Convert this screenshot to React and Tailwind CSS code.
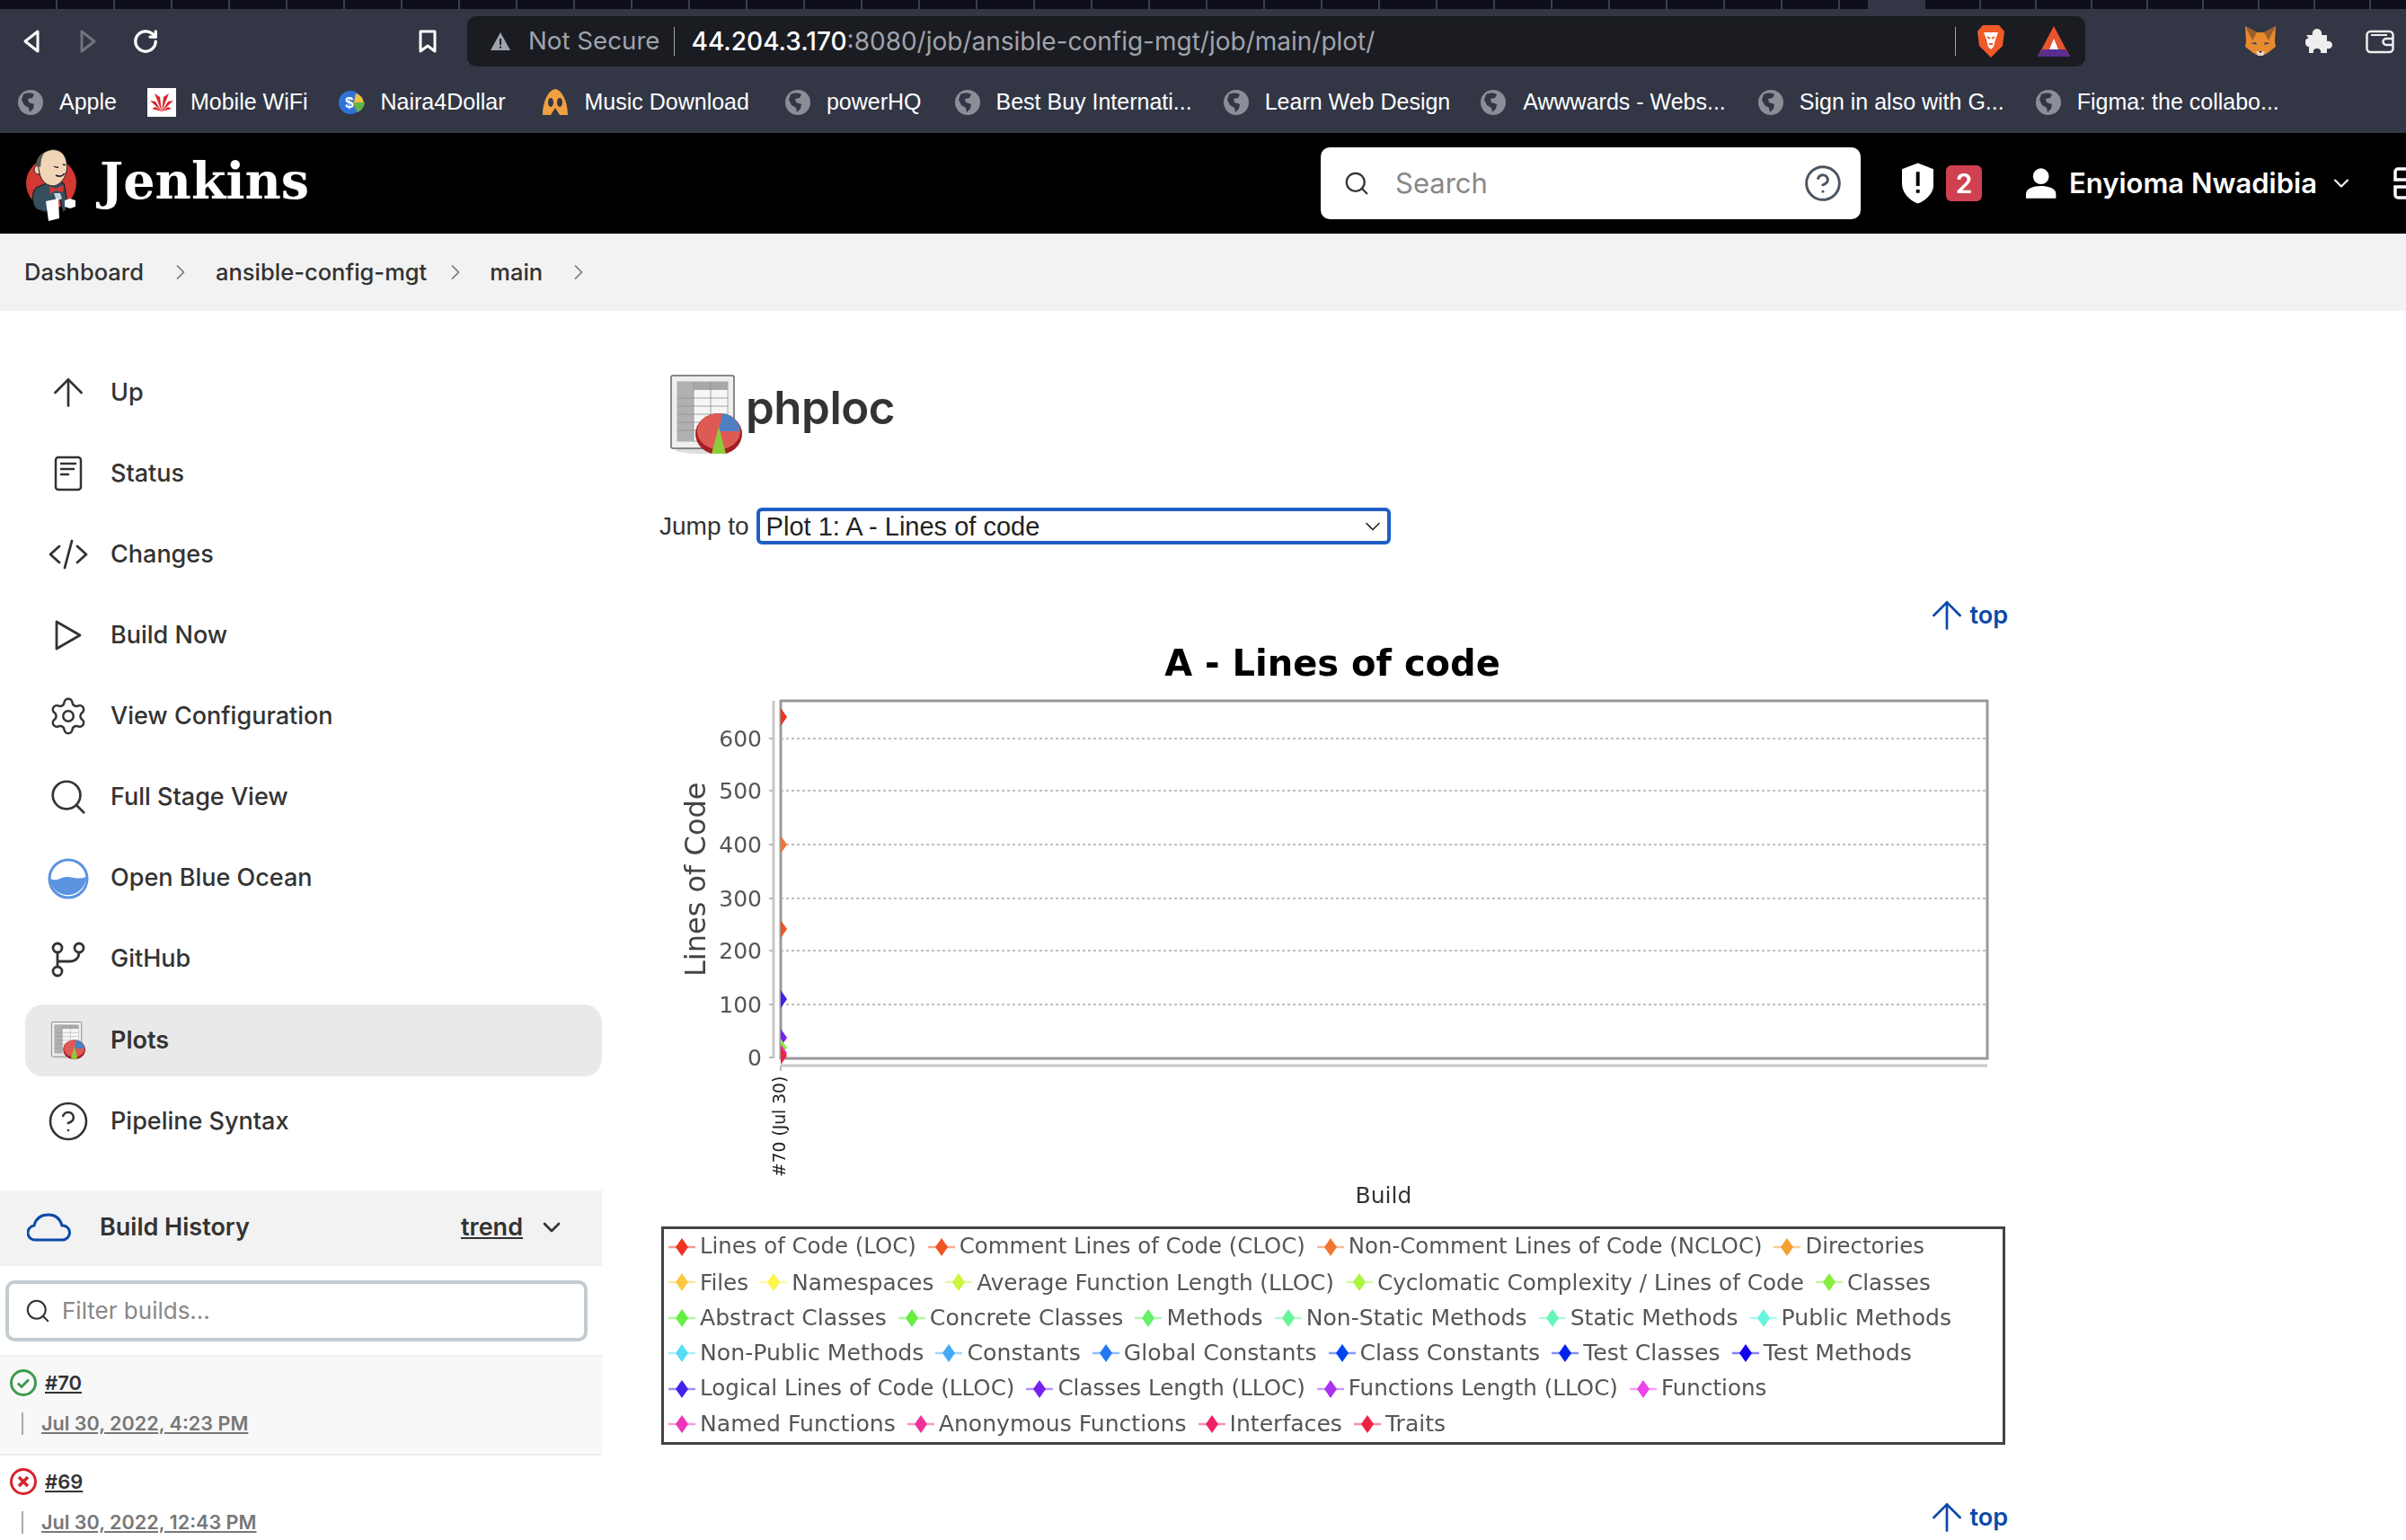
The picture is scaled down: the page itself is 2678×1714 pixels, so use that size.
import { ArrowUp, ChevronDown, ChevronRight, CircleHelp, RotateCw, Search, Settings } from "lucide-react"

const bookmarks = [
  { label: "Apple", icon: "globe", ml: 20, gap: 18 },
  { label: "Mobile WiFi", icon: "huawei", ml: 34, gap: 16 },
  { label: "Naira4Dollar", icon: "naira", ml: 33, gap: 16 },
  { label: "Music Download", icon: "music", ml: 40, gap: 16 },
  { label: "powerHQ", icon: "globe", ml: 40, gap: 18 },
  { label: "Best Buy Internati...", icon: "globe", ml: 37, gap: 18 },
  { label: "Learn Web Design", icon: "globe", ml: 35, gap: 18 },
  { label: "Awwwards - Webs...", icon: "globe", ml: 34, gap: 19 },
  { label: "Sign in also with G...", icon: "globe", ml: 36, gap: 18 },
  { label: "Figma: the collabo...", icon: "globe", ml: 35, gap: 18 },
]

// text size differs a little per row, the chart image is a hinted render
const legendRows = [
  { size: "text-[24.4px]", items: [["Lines of Code (LOC)", "#ee3322"], ["Comment Lines of Code (CLOC)", "#ee5522"], ["Non-Comment Lines of Code (NCLOC)", "#f07730"], ["Directories", "#f5a030"]] },
  { size: "text-[24.7px]", items: [["Files", "#fdc840"], ["Namespaces", "#fff44a"], ["Average Function Length (LLOC)", "#ccf53d"], ["Cyclomatic Complexity / Lines of Code", "#aaf53d"], ["Classes", "#88ee3d"]] },
  { size: "text-[25.1px]", items: [["Abstract Classes", "#66ee44"], ["Concrete Classes", "#66ee44"], ["Methods", "#66f266"], ["Non-Static Methods", "#66f599"], ["Static Methods", "#66f5bb"], ["Public Methods", "#66f5dd"]] },
  { size: "text-[25.2px]", items: [["Non-Public Methods", "#55ddf5"], ["Constants", "#44aaf5"], ["Global Constants", "#2277f5"], ["Class Constants", "#0044ee"], ["Test Classes", "#0022ee"], ["Test Methods", "#1100ee"]] },
  { size: "text-[24.6px]", items: [["Logical Lines of Code (LLOC)", "#4422ee"], ["Classes Length (LLOC)", "#7722ee"], ["Functions Length (LLOC)", "#aa33ee"], ["Functions", "#ee44ee"]] },
  { size: "text-[25.1px]", items: [["Named Functions", "#ee33bb"], ["Anonymous Functions", "#ee3399"], ["Interfaces", "#ee2266"], ["Traits", "#ee2244"]] },
]

const GlobeIcon = () => (
  <svg width="28" height="28" viewBox="0 0 28 28">
    <circle cx="14" cy="14" r="14" fill="#8b8e97" />
    <path d="M6 5c4-2 9-2 12 0l-2 4-5 1 1 4 6 2-1 5-4 4-1-5-5-3-3-6z" fill="#323645" />
  </svg>
)

const HuaweiIcon = () => (
  <svg width="32" height="32" viewBox="0 0 32 32">
    <rect width="32" height="32" fill="#fff" />
    <path d="M16 26 8 6l6 4 2 16 2-16 6-4zM16 26 3 14l6 1zM16 26l13-12-6 1zM16 26 5 23l4-2zM16 26l11-3-4-2z" fill="#d9222a" />
  </svg>
)

const NairaIcon = () => (
  <svg width="32" height="32" viewBox="0 0 32 32">
    <circle cx="14" cy="16" r="13" fill="#2f73d8" />
    <path d="M16 16h14a14 14 0 0 1-8 11z" fill="#5fb548" />
    <path d="M20 6a13 13 0 0 1 9 10H18z" fill="#f3c33c" />
    <text x="8" y="22" fontSize="17" fontWeight="700" fill="#fff" fontFamily="Liberation Sans, sans-serif">$</text>
  </svg>
)

const MusicIcon = () => (
  <svg width="32" height="32" viewBox="0 0 32 32">
    <path d="M16 1c9 2 14 16 14 29h-9l-5-8-5 8H2C2 17 7 3 16 1z" fill="#f0a040" />
    <ellipse cx="11" cy="16" rx="3" ry="5" fill="#323645" />
    <ellipse cx="21" cy="16" rx="3" ry="5" fill="#323645" />
  </svg>
)

const bookmarkIcons = { globe: GlobeIcon, huawei: HuaweiIcon, naira: NairaIcon, music: MusicIcon }

// the spreadsheet with pie chart that Plots uses
const PlotIcon = ({ size }) => (
  <svg width={size} height={size * 1.1} viewBox="0 0 80 88">
    <ellipse cx="38" cy="84" rx="32" ry="4" fill="#ddd" />
    <rect x="1" y="1" width="70" height="81" rx="2" fill="#efefef" stroke="#666" strokeWidth="1.5" />
    <rect x="8" y="8" width="56" height="66" fill="#f6f6f6" stroke="#aaa" />
    <rect x="8" y="8" width="56" height="9" fill="#a8a8a8" />
    <rect x="8" y="8" width="18" height="66" fill="#b0b0b0" />
    <path d="M8 26h56M8 35h56M8 44h56M8 53h56M8 62h56M26 8v66M45 8v66" stroke="#8f8f8f" strokeWidth="0.8" />
    <ellipse cx="54" cy="66" rx="26" ry="23" fill="#a31f1f" />
    <ellipse cx="54" cy="63" rx="24" ry="20" fill="#dd5a55" />
    <path d="M54 63l4-20a24 20 0 0 1 20 20z" fill="#4f7fc0" />
    <path d="M54 58l8 30H46z" fill="#8ecb3c" />
  </svg>
)

const JenkinsLogo = () => (
  <svg width="100" height="105" viewBox="0 0 100 105">
    <circle cx="47" cy="52" r="28" fill="#d33833" />
    <path d="M30 57C24 64 26 76 31 81l10 3 6-10 10-4 3 14 3-2 1-14-3-16-10-4z" fill="#335061" stroke="#111" strokeWidth="1" />
    <circle cx="33" cy="37" r="5" fill="#f0d6b7" stroke="#222" strokeWidth="1" />
    <path d="M32 30C33 18 45 13 53 15c9 2 13 12 11 24-2 9-8 15-14 16-9 0-14-6-16-14z" fill="#f0d6b7" stroke="#222" strokeWidth="1" />
    <path d="M30 33c0-8 4-13 9-15l-3 7-1 9z" fill="#555" />
    <path d="M50 33q3 2 5 1M60 31q2 1 3 0M52 43q6 3 10-2" fill="none" stroke="#222" strokeWidth="1.5" />
    <path d="M45 55l7 3 9-4-1 8-8-2-6 4z" fill="#d33833" />
    <path d="M50 63h7l2 6-6 3z" fill="#c8d5df" />
    <path d="M41 72l14-3 1 22-12 3z" fill="#fff" />
    <path d="M62 71l6-2 6 2v7l-6 2-6-2z" fill="#fff" />
  </svg>
)

const SideItem = ({ icon, label, active }) => (
  <div className={`flex h-[80px] items-center rounded-[20px] ${active ? "bg-[#e9e9e9] font-semibold" : "font-medium"}`}>
    <div className="flex w-[95px] shrink-0 justify-center">{icon}</div>
    <span>{label}</span>
  </div>
)

const TopLink = () => (
  <div className="flex h-[40px] items-center justify-end pr-[1px] text-[27px] font-semibold text-[#0b4aa8]">
    <ArrowUp size={50} strokeWidth={1.3} />
    <span>top</span>
  </div>
)

const BuildRow = ({ num, date, ok }) => (
  <div className={`h-[110px] shrink-0 border-t-2 border-[#eeeeee] pl-[11px] pt-[13px] ${ok ? "bg-[#f8f8f8]" : ""}`}>
    <div className="flex items-center gap-[9px]">
      {ok ? (
        <svg width="30" height="30" viewBox="0 0 30 30" fill="none">
          <circle cx="15" cy="15" r="13.500" stroke="#3f9a4f" strokeWidth="3" />
          <path d="M9 15.500l4 4 8-8" stroke="#3f9a4f" strokeWidth="3" />
        </svg>
      ) : (
        <svg width="30" height="30" viewBox="0 0 30 30" fill="none">
          <circle cx="15" cy="15" r="13.500" stroke="#d3262e" strokeWidth="3" />
          <path d="M10 10l10 10M20 10 10 20" stroke="#d3262e" strokeWidth="3.500" />
        </svg>
      )}
      <span className="text-[22px] font-semibold text-[#333] underline">{num}</span>
    </div>
    <div className="mt-[12px] flex items-center">
      <div className="ml-[13px] h-[25px] w-[2px] bg-[#aaaaaa]" />
      <span className="ml-[20px] text-[21.6px] font-semibold text-[#777] underline">{date}</span>
    </div>
  </div>
)

const LegendMarker = ({ color }) => (
  <svg width="30" height="30" viewBox="0 0 30 30" className="shrink-0">
    <path d="M0 15h30" stroke={color} strokeWidth="2.500" opacity="0.5" />
    <path d="M15 5l7 10-7 10-7-10z" fill={color} />
  </svg>
)

const Chart = () => {
  const grid = [[822, "600"], [880, "500"], [940, "400"], [1000, "300"], [1058, "200"], [1118, "100"], [1177, "0"]]
  const points = [[798, "#ee3322"], [940, "#f07730"], [1034, "#ee5522"], [1112, "#4422ee"], [1155, "#7722ee"], [1166, "#88ee3d"], [1172, "#ee33bb"], [1175, "#ee2244"]]
  return (
    <svg width="1500" height="650" viewBox="734 705 1500 650" className="block blur-[0.4px]" fontFamily="DejaVu Sans, sans-serif">
      <text x="1483" y="752" textAnchor="middle" fontSize="40" fontWeight="700" fill="#000">A - Lines of code</text>
      <rect x="869" y="780" width="1343" height="398" fill="#fff" stroke="#9a9a9a" strokeWidth="3" />
      <path d="M861 780v398M869 1186h1343" stroke="#c8c8c8" strokeWidth="3" fill="none" />
      <path d="M869 1186v6" stroke="#bbb" strokeWidth="2" />
      {grid.map(([y, label]) => (
        <g key={label}>
          <path d={`M856 ${y}h5`} stroke="#bbb" strokeWidth="2" />
          {label !== "0" && <path d={`M869 ${y}H2212`} stroke="#aaa" strokeWidth="1.5" strokeDasharray="3 3" />}
          <text x="848" y={y + 9} textAnchor="end" fontSize="25" fill="#555">{label}</text>
        </g>
      ))}
      {points.map(([y, color]) => (
        <path key={y} d={`M869 ${y - 10}l7 10-7 10z`} fill={color} />
      ))}
      <text transform="translate(785 1087) rotate(-90)" fontSize="32" fill="#444">Lines of Code</text>
      <text transform="translate(874 1310) rotate(-90)" fontSize="18.700" fill="#222">#70 (Jul 30)</text>
      <text x="1540" y="1339" textAnchor="middle" fontSize="25" fill="#333">Build</text>
    </svg>
  )
}

export default function App() {
  return (
    <div className="flex h-[1714px] w-[2678px] flex-col overflow-hidden bg-white font-[Inter,sans-serif] text-[#333]">
      {/* browser tabs */}
      <div className="flex h-[10px] shrink-0 bg-[#0d0e1a]">
        <div className="h-full w-[2079px] bg-[repeating-linear-gradient(90deg,#0d0e1a_0,#0d0e1a_62px,#3a3d4a_62px,#3a3d4a_64px)]" />
        <div className="h-full w-[64px] bg-[#323645]" />
        <div className="h-full grow bg-[repeating-linear-gradient(90deg,#0d0e1a_0,#0d0e1a_60px,#3a3d4a_60px,#3a3d4a_62px)]" />
      </div>

      {/* browser toolbar */}
      <div className="flex h-[68px] shrink-0 items-center bg-[#323645] pt-[4px] text-[27.7px]">
        <svg width="20" height="28" viewBox="0 0 20 28" fill="none" className="ml-[25px]"><path d="M17 3 3 14l14 11z" stroke="#fff" strokeWidth="3" strokeLinejoin="round" /></svg>
        <svg width="20" height="28" viewBox="0 0 20 28" fill="none" className="ml-[43px]"><path d="M3 3l14 11L3 25z" stroke="#70737e" strokeWidth="3" strokeLinejoin="round" /></svg>
        <RotateCw size={30} color="#fff" strokeWidth={2.6} className="ml-[39px]" />
        <svg width="22" height="28" viewBox="0 0 22 28" fill="none" className="ml-[288px]"><path d="M3 3h16v22l-8-6-8 6z" stroke="#fff" strokeWidth="3" strokeLinejoin="round" /></svg>
        <div className="ml-[33px] flex h-[56px] w-[1801px] items-center rounded-[10px] bg-[#1a1c22] pl-[25px]">
          <svg width="24" height="22" viewBox="0 0 24 22"><path d="M12 1 23 21H1z" fill="#a0a3ab" /><path d="M11 8h2v7h-2zM11 16.500h2v2h-2z" fill="#1a1c22" /></svg>
          <span className="ml-[19px] whitespace-nowrap text-[#a0a3ab]">Not Secure</span>
          <div className="ml-[15px] h-[32px] w-px bg-[#a0a3ab]" />
          <span className="ml-[19px] text-[28px] font-medium text-white">44.204.3.170</span>
          <span className="whitespace-nowrap text-[28px] text-[#a0a3ab]">:8080/job/ansible-config-mgt/job/main/plot/</span>
          <div className="ml-auto h-[32px] w-px bg-[#a0a3ab]" />
          <svg width="32" height="38" viewBox="0 0 32 38" className="ml-[23px]">
            <path d="M7 1h18l6 7-2 16-13 13L3 24 1 8z" fill="#ef5a28" />
            <path d="M8 9h16l-3 8-2 8-3 3-3-3-2-8z" fill="#fff" />
            <path d="M12 14l3 2M20 14l-3 2M14 22h4" stroke="#ef5a28" strokeWidth="2" />
          </svg>
          <svg width="38" height="34" viewBox="0 0 38 34" className="ml-[35px] mr-[16px]">
            <path d="M19 0 37 34H1z" fill="#e8542e" />
            <path d="M19 14l5 12H14z" fill="#fff" />
            <path d="M6 26h26l5 8H1z" fill="#5a2d91" />
          </svg>
        </div>
        <svg width="36" height="34" viewBox="0 0 36 34" className="ml-[177px]">
          <path d="M1 0l13 7h8L35 0l-1 17 1 6-9 7-4 2h-8l-4-2-9-7 1-6z" fill="#e88a2e" />
          <path d="M1 0l13 7-5 9zM35 0 22 7l5 9z" fill="#9c5f2c" />
          <path d="M7 19l6-1 1 3zM29 19l-6-1-1 3z" fill="#3d4a6a" />
          <path d="M13 28h10l-2 5h-6z" fill="#e3d6c8" />
          <path d="M16 28h4l-2 2z" fill="#222" />
        </svg>
        <svg width="30" height="28" viewBox="0 0 30 28" className="ml-[32px]">
          <path d="M1 7h7c-1-3 1-7 5-7s6 4 5 7h6v7c3-1 6 1 6 4s-3 5-6 4v5h-7c1-4-2-5-4-5s-5 1-4 5H4v-7c-2 0-4-1-4-5s2-5 4-4z" fill="#eee" />
        </svg>
        <svg width="32" height="28" viewBox="0 0 32 28" fill="none" className="ml-[37px]">
          <rect x="1.500" y="3" width="29" height="23" rx="4" stroke="#eee" strokeWidth="2.500" />
          <path d="M6 7h18" stroke="#eee" strokeWidth="2" />
          <path d="M30 11h-7a3.500 3.500 0 0 0 0 7h7" stroke="#eee" strokeWidth="2.500" />
        </svg>
      </div>

      {/* bookmarks */}
      <div className="flex h-[70px] shrink-0 items-center bg-[#323645] pt-[2px] font-['Liberation_Sans',sans-serif] text-[25px] text-white">
        {bookmarks.map((b) => {
          const Icon = bookmarkIcons[b.icon]
          return (
            <div key={b.label} className="flex items-center" style={{ marginLeft: b.ml, gap: b.gap }}>
              <Icon />
              <span className="whitespace-nowrap">{b.label}</span>
            </div>
          )
        })}
      </div>

      {/* jenkins header */}
      <div className="flex h-[112px] shrink-0 items-center bg-black text-white">
        <div className="flex w-[1470px] shrink-0 items-center pl-[10px]">
          <JenkinsLogo />
          <span className="pb-[4px] pl-[1px] font-['DejaVu_Serif',serif] text-[55.5px] font-bold">Jenkins</span>
        </div>
        <div className="flex h-[80px] w-[601px] shrink-0 items-center rounded-[10px] bg-white pl-[25px] pr-[20px]">
          <Search size={30} color="#333" strokeWidth={1.8} />
          <span className="ml-[28px] text-[31px] text-[#888]">Search</span>
          <CircleHelp size={44} color="#4a5560" strokeWidth={1.6} className="ml-auto" />
        </div>
        <svg width="36" height="46" viewBox="0 0 36 46" className="ml-[46px]">
          <path d="M18 0l18 7v16c0 11-8 19-18 23C8 42 0 34 0 23V7z" fill="#fff" />
          <path d="M16 10h4v16h-4zM16 30h4v4h-4z" fill="#000" />
        </svg>
        <div className="ml-[14px] flex h-[40px] w-[40px] items-center justify-center rounded-[6px] bg-[#cf4150] text-[30px] font-semibold">2</div>
        <svg width="36" height="34" viewBox="0 0 36 34" className="ml-[48px]">
          <circle cx="18" cy="9" r="9" fill="#fff" />
          <path d="M1 34v-5c0-6 8-9 17-9s17 3 17 9v5z" fill="#fff" />
        </svg>
        <span className="ml-[14px] whitespace-nowrap text-[31px] font-semibold">Enyioma Nwadibia</span>
        <ChevronDown size={28} strokeWidth={1.8} className="ml-[13px] shrink-0" />
        <svg width="14" height="36" viewBox="0 0 14 36" fill="none" stroke="#fff" strokeWidth="3.500" className="ml-[44px] shrink-0">
          <path d="M14 2H5a3 3 0 0 0-3 3v9h12M14 34H5a3 3 0 0 1-3-3v-9h12" />
        </svg>
      </div>

      {/* breadcrumb */}
      <div className="flex h-[86px] shrink-0 items-center bg-[#f2f2f2] pl-[27px] text-[25.5px] font-medium">
        <span>Dashboard</span>
        <ChevronRight size={28} color="#777" strokeWidth={1.5} className="ml-[27px]" />
        <span className="ml-[25px]">ansible-config-mgt</span>
        <ChevronRight size={28} color="#777" strokeWidth={1.5} className="ml-[18px]" />
        <span className="ml-[24px]">main</span>
        <ChevronRight size={28} color="#777" strokeWidth={1.5} className="ml-[26px]" />
      </div>

      <div className="flex min-h-0 grow">
        {/* sidebar */}
        <aside className="flex w-[670px] shrink-0 flex-col pt-[51px] text-[27px]">
          <div className="ml-[28px] flex flex-col gap-[10.1px]">
            <SideItem label="Up" icon={<ArrowUp size={50} strokeWidth={1.3} />} />
            <SideItem label="Status" icon={
              <svg width="32" height="40" viewBox="0 0 32 40" fill="none" stroke="#333" strokeWidth="2.500" strokeLinecap="round">
                <rect x="2" y="2" width="28" height="36" rx="3" />
                <path d="M8 9h16M8 15h14M8 21h8" />
              </svg>
            } />
            <SideItem label="Changes" icon={
              <svg width="44" height="34" viewBox="0 0 44 34" fill="none" stroke="#333" strokeWidth="2.800" strokeLinecap="round" strokeLinejoin="round">
                <path d="M12 8 2 17l10 9M32 8l10 9-10 9M26 2l-8 30" />
              </svg>
            } />
            <SideItem label="Build Now" icon={
              <svg width="30" height="34" viewBox="0 0 30 34" fill="none" stroke="#333" strokeWidth="2.800" strokeLinejoin="round">
                <path d="M2 2l26 15L2 32z" />
              </svg>
            } />
            <SideItem label="View Configuration" icon={<Settings size={46} strokeWidth={1.3} />} />
            <SideItem label="Full Stage View" icon={<Search size={46} strokeWidth={1.4} />} />
            <SideItem label="Open Blue Ocean" icon={
              <svg width="46" height="46" viewBox="0 0 46 46">
                <circle cx="23" cy="23" r="21" fill="#fff" stroke="#5b93e0" strokeWidth="3" />
                <path d="M3 23c8 4 12-3 20-2s12 3 20 0c0 10-9 20-20 20S3 33 3 23z" fill="#5b93e0" />
              </svg>
            } />
            <SideItem label="GitHub" icon={
              <svg width="38" height="40" viewBox="0 0 38 40" fill="none" stroke="#333" strokeWidth="2.800">
                <circle cx="7" cy="7" r="5" />
                <circle cx="31" cy="7" r="5" />
                <circle cx="7" cy="33" r="5" />
                <path d="M7 12v16M7 22h14c6 0 10-4 10-10" />
              </svg>
            } />
            <SideItem label="Plots" active icon={<PlotIcon size={38} />} />
            <SideItem label="Pipeline Syntax" icon={<CircleHelp size={48} strokeWidth={1.3} />} />
          </div>

          <div className="mt-[37px] flex h-[84px] shrink-0 items-center bg-[#f2f2f2] pb-[2px] pl-[30px] pr-[40px]">
            <svg width="50" height="32" viewBox="0 0 50 32" fill="none" stroke="#0b4aa8" strokeWidth="3">
              <path d="M10 30a8 8 0 0 1-2-16C10 6 16 2 24 2c8 0 13 5 15 12a8 8 0 0 1 1 16z" />
            </svg>
            <span className="ml-[31px] font-semibold">Build History</span>
            <span className="ml-auto font-semibold underline">trend</span>
            <ChevronDown size={32} className="ml-[16px]" />
          </div>
          <div className="shrink-0 px-[6px] pb-[15px] pr-[16px] pt-[16px]">
            <div className="flex h-[68px] items-center rounded-[10px] border-[4px] border-[#c3ccd1] pl-[17px]">
              <Search size={30} strokeWidth={1.6} />
              <span className="ml-[12px] text-[26px] text-[#888]">Filter builds...</span>
            </div>
          </div>
          <BuildRow num="#70" date="Jul 30, 2022, 4:23 PM" ok />
          <BuildRow num="#69" date="Jul 30, 2022, 12:43 PM" />
        </aside>

        {/* plot */}
        <main className="ml-[64px] flex w-[1502px] flex-col pt-[70px]">
          <div className="flex h-[90px] items-center pl-[12px]">
            <PlotIcon size={80} />
            <h1 className="ml-[4px] pb-[14px] text-[51px] font-semibold tracking-[-0.5px]">phploc</h1>
          </div>
          <div className="mt-[59px] flex h-[41px] items-center font-['Liberation_Sans',sans-serif] text-[28px]">
            <span>Jump to</span>
            <div className="ml-[8px] flex h-[41px] w-[706px] items-center rounded-[6px] border-[4px] border-[#1f5fc4] pl-[7px] pr-[2px] text-[29px] text-[#222]">
              <span className="pt-[2px]">Plot 1: A - Lines of code</span>
              <ChevronDown size={28} strokeWidth={1.4} className="ml-auto" />
            </div>
          </div>
          <div className="mt-[59px]"><TopLink /></div>
          <Chart />
          <div className="mt-[10px] ml-[2px] flex h-[243px] w-[1496px] flex-col justify-center border-[3px] border-[#444] pl-[5px] font-['DejaVu_Sans',sans-serif] text-[#555] blur-[0.4px]">
            {legendRows.map((row, i) => (
              <div key={i} className={`flex h-[40px] items-center gap-[13px] whitespace-nowrap ${row.size}`}>
                {row.items.map(([label, color]) => (
                  <div key={label} className="flex items-center gap-[5px]">
                    <LegendMarker color={color} />
                    <span>{label}</span>
                  </div>
                ))}
              </div>
            ))}
          </div>
          <div className="mt-[61px]"><TopLink /></div>
        </main>
      </div>
    </div>
  )
}
